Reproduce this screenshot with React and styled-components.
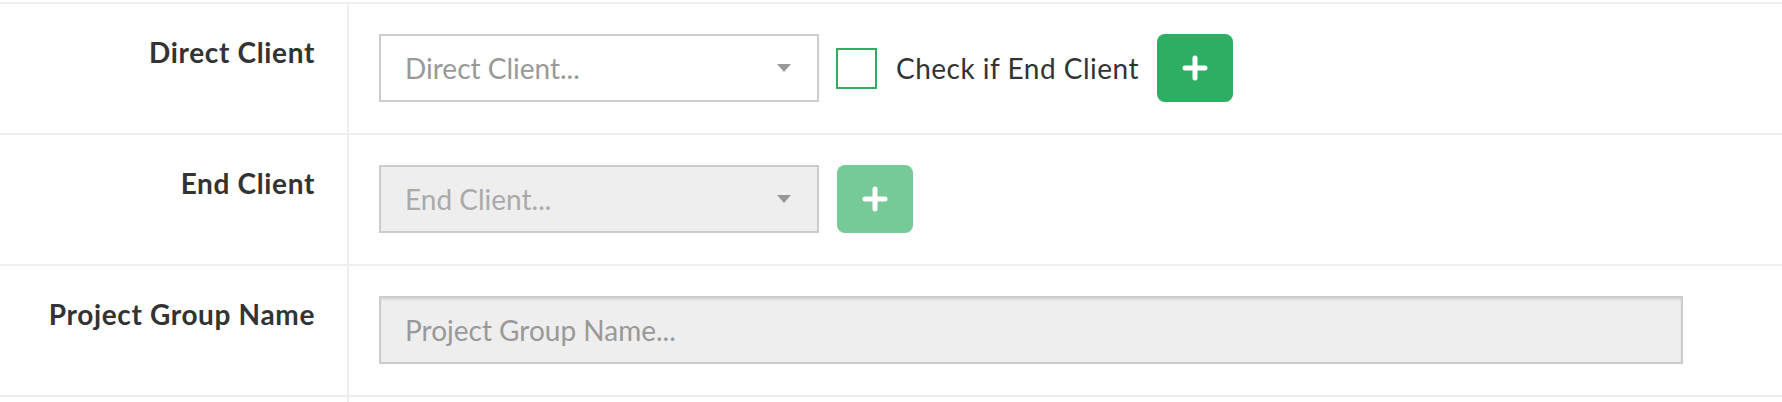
import React from "react";
import styled, { createGlobalStyle } from "styled-components";

const Global = createGlobalStyle`
  html, body { margin: 0; padding: 0; background: #fff; }
  body { font-family: Lato, "Open Sans", "Liberation Sans", sans-serif; color: #333; }
  * { box-sizing: border-box; }
`;

const Form = styled.div`
  padding-top: 2px;
  width: 1782px;
`;

const Row = styled.div`
  display: grid;
  grid-template-columns: 347px 1fr;
  border-top: 2px solid #eeeeee;
  min-height: ${(p) => (p.$empty ? "40px" : "129px")};
`;

const Label = styled.div`
  text-align: right;
  padding: 28px 32px 0 0;
  font-size: 28px;
  line-height: 40px;
  font-weight: 700;
  letter-spacing: 0.65px;
  color: #333;
`;

const Field = styled.div`
  border-left: 2px solid #eeeeee;
  padding: 30px 0 31px 30px;
  display: flex;
  align-items: center;
  align-self: stretch;
`;

const SelectBox = styled.div`
  position: relative;
  width: 440px;
  height: 68px;
  border: 2px solid #cccccc;
  background: ${(p) => (p.$disabled ? "#eeeeee" : "#ffffff")};
  display: flex;
  align-items: center;
  padding: 0 60px 0 24px;
  font-size: 28px;
  font-weight: 400;
  color: ${(p) => (p.$disabled ? "#aaaaaa" : "#999999")};
`;

const Caret = styled.span`
  position: absolute;
  right: 26px;
  top: 28px;
  width: 0;
  height: 0;
  border-left: 7px solid transparent;
  border-right: 7px solid transparent;
  border-top: 8px solid #999999;
`;

const CheckLabel = styled.label`
  display: flex;
  align-items: center;
  margin-left: 17px;
  font-size: 28px;
  letter-spacing: 0.5px;
  color: #333;
  cursor: pointer;
`;

const CheckBox = styled.span`
  display: inline-block;
  width: 41px;
  height: 41px;
  border: 2px solid #2eae62;
  background: #fff;
  margin-right: 19px;
`;

const AddButton = styled.button`
  margin-left: 18px;
  width: 76px;
  height: 68px;
  border: none;
  border-radius: 8px;
  background: #2eae62;
  opacity: ${(p) => (p.disabled ? 0.65 : 1)};
  display: flex;
  align-items: center;
  justify-content: center;
  padding: 0;
  cursor: ${(p) => (p.disabled ? "not-allowed" : "pointer")};
`;

const TextInput = styled.input`
  width: 1304px;
  height: 68px;
  border: 2px solid #cccccc;
  background: #eeeeee;
  box-shadow: inset 0 2px 2px rgba(0, 0, 0, 0.075);
  padding: 0 24px;
  font-family: inherit;
  font-size: 28px;
  color: #555;
  outline: none;
  &::placeholder { color: #999999; opacity: 1; }
`;

const Plus = () => (
  <svg width="26" height="26" viewBox="0 0 26 26">
    <path d="M13 3v20M3 13h20" stroke="#fff" strokeWidth="5" strokeLinecap="round" fill="none" />
  </svg>
);

export default function App() {
  return (
    <>
      <Global />
      <Form>
        <Row>
          <Label>Direct Client</Label>
          <Field>
            <SelectBox>
              Direct Client...
              <Caret />
            </SelectBox>
            <CheckLabel>
              <CheckBox />
              Check if End Client
            </CheckLabel>
            <AddButton type="button">
              <Plus />
            </AddButton>
          </Field>
        </Row>
        <Row>
          <Label>End Client</Label>
          <Field>
            <SelectBox $disabled>
              End Client...
              <Caret />
            </SelectBox>
            <AddButton type="button" disabled>
              <Plus />
            </AddButton>
          </Field>
        </Row>
        <Row>
          <Label>Project Group Name</Label>
          <Field>
            <TextInput placeholder="Project Group Name..." disabled />
          </Field>
        </Row>
        <Row $empty>
          <Label />
          <Field />
        </Row>
      </Form>
    </>
  );
}
